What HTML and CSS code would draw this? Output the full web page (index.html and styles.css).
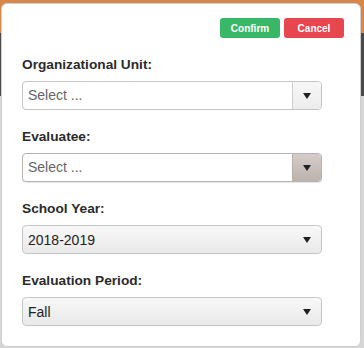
FILE: index.html
```html
<!DOCTYPE html>
<html lang="en">
<head>
  <meta charset="UTF-8" />
  <meta name="viewport" content="width=device-width, initial-scale=1.0" />
  <title>Evaluation Filter</title>
  <link rel="stylesheet" href="styles.css">
</head>
<body>
  <div class="page">
    <div class="topbar"></div>
    <div class="toolbar"></div>
    <div class="content"></div>
  </div>

  <div class="modal">
    <div class="modal-actions">
      <button class="btn btn-confirm">Confirm</button>
      <button class="btn btn-cancel">Cancel</button>
    </div>

    <form class="filter-form">
      <div class="field">
        <label class="field-label">Organizational Unit:</label>
        <div class="combo">
          <span class="combo-text">Select ...</span>
          <span class="combo-toggle"><span class="caret"></span></span>
        </div>
      </div>

      <div class="field">
        <label class="field-label">Evaluatee:</label>
        <div class="combo combo-hover">
          <span class="combo-text">Select ...</span>
          <span class="combo-toggle"><span class="caret"></span></span>
        </div>
      </div>

      <div class="field">
        <label class="field-label">School Year:</label>
        <div class="dropdown">
          <span class="dropdown-text">2018-2019</span>
          <span class="caret"></span>
        </div>
      </div>

      <div class="field">
        <label class="field-label">Evaluation Period:</label>
        <div class="dropdown">
          <span class="dropdown-text">Fall</span>
          <span class="caret"></span>
        </div>
      </div>
    </form>
  </div>
</body>
</html>
```

FILE: styles.css
```css
body {
  margin: 0;
  font-family: 'Liberation Sans', Arial, sans-serif;
  color: #333;
  overflow: hidden;
}

.page {
  height: 348px;
  display: flex;
  flex-direction: column;
}

.topbar {
  height: 33px;
  background: #d8874a;
}

.toolbar {
  height: 63px;
  background: #4a4a4a;
}

.content {
  flex: 1;
  background: #d6d6d6;
}

.modal {
  position: absolute;
  top: 3px;
  left: 1px;
  width: 360px;
  height: 344px;
  background: white;
  border: 1px solid #d0d0d0;
  border-radius: 6px;
  box-sizing: border-box;
  padding: 14px 16px 0 20px;
}

.modal-actions {
  display: flex;
  justify-content: flex-end;
  gap: 4px;
}

.btn {
  width: 60px;
  height: 20px;
  border: none;
  border-radius: 3px;
  color: white;
  font-family: 'Liberation Sans', Arial, sans-serif;
  font-weight: bold;
  font-size: 10px;
  padding: 0;
}

.btn-confirm {
  background: #38b866;
}

.btn-cancel {
  background: #e8464e;
}

.filter-form {
  width: 300px;
  margin-top: 18px;
}

.field {
  margin-bottom: 18px;
}

.field-label {
  display: block;
  height: 17px;
  line-height: 17px;
  font-size: 13.7px;
  font-weight: bold;
  color: #2b2b2b;
  margin-bottom: 8px;
}

.combo {
  display: flex;
  height: 29px;
  border: 1px solid #c4c4c4;
  border-radius: 4px;
  box-sizing: border-box;
  overflow: hidden;
  background: white;
}

.combo-text {
  flex: 1;
  padding-left: 5px;
  line-height: 27px;
  font-size: 14px;
  color: #666;
}

.combo-toggle {
  width: 28px;
  border-left: 1px solid #cfcfcf;
  background: linear-gradient(#f7f7f7, #ececec);
  display: flex;
  align-items: center;
  justify-content: center;
}

.combo-hover {
  border-color: #b8b2ae;
  box-shadow: 0 1px 1px rgba(0, 0, 0, 0.1);
}

.combo-hover .combo-toggle {
  background: linear-gradient(#d5cdc9, #bdb3ad);
  border-left-color: #b8afa9;
}

.dropdown {
  display: flex;
  align-items: center;
  height: 29px;
  border: 1px solid #c6c6c6;
  border-radius: 4px;
  box-sizing: border-box;
  background: linear-gradient(#f8f8f8, #e9e9e9);
  padding: 0 10px 0 5px;
}

.dropdown-text {
  flex: 1;
  font-size: 14px;
  color: #222;
}

.caret {
  width: 0;
  height: 0;
  border-left: 4px solid transparent;
  border-right: 4px solid transparent;
  border-top: 6px solid #222;
}
```
